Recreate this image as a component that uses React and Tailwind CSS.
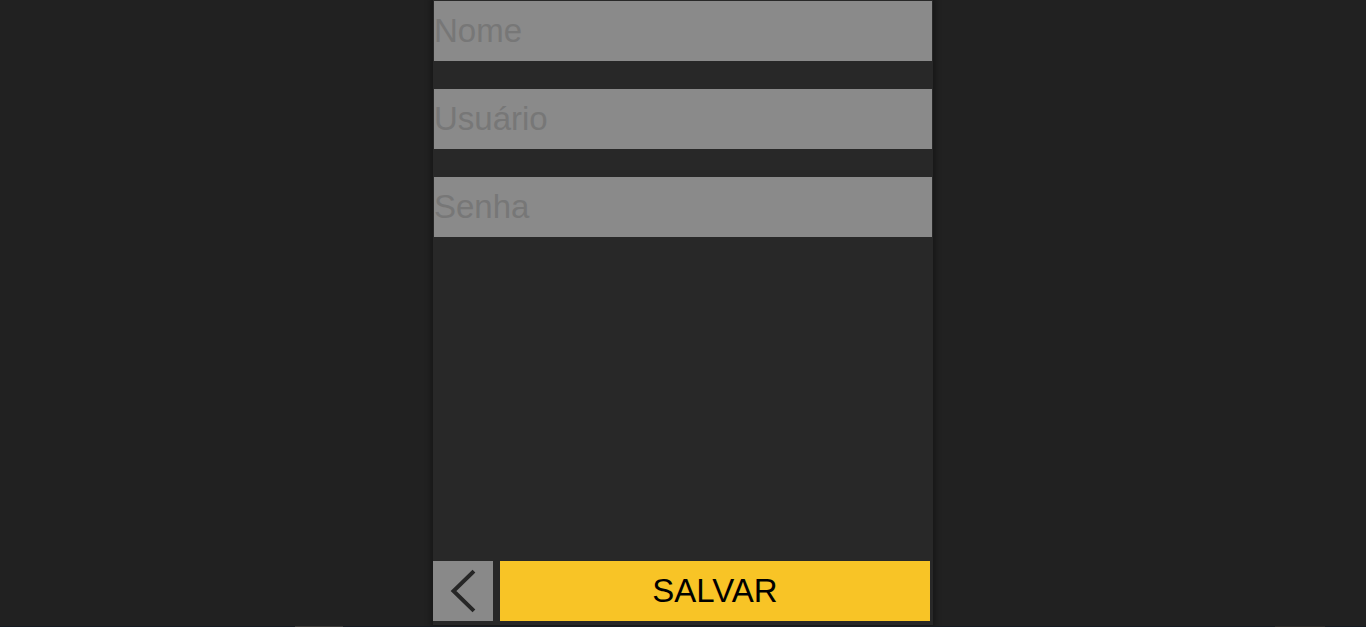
import React from "react";

export default function App() {
  const font = { fontFamily: '"Liberation Sans", Arial, sans-serif' };
  return (
    <div className="w-full h-[627px] bg-[#212121] flex flex-col overflow-hidden" style={font}>
      <div className="flex-1 flex justify-center">
        <div className="w-[500px] h-[625px] bg-[#282828] flex flex-col shadow-[0_0_6px_2px_rgba(0,0,0,0.35)]">
          <div className="mx-px mt-px flex flex-col gap-[28px]">
            {["Nome", "Usuário", "Senha"].map((p) => (
              <input
                key={p}
                placeholder={p}
                className="h-[60px] w-full bg-[#8a8a8a] text-[33px] text-[#333] placeholder:text-[#777777] outline-none px-0 pb-px"
                style={font}
              />
            ))}
          </div>
          <div className="flex-1" />
          <div className="flex h-[60px] gap-[7px] mb-[4px] pr-[3px]">
            <button className="w-[60px] h-[60px] bg-[#898989] flex items-center justify-center">
              <svg width="60" height="60" viewBox="0 0 60 60">
                <polyline points="39.5,11.5 20.5,30 39.5,48.5" fill="none" stroke="#262626" strokeWidth="4" strokeLinecap="square" />
              </svg>
            </button>
            <button className="flex-1 h-[60px] bg-[#f8c426] text-black text-[33px] flex items-center justify-center" style={font}>
              SALVAR
            </button>
          </div>
        </div>
      </div>
      <div className="h-px w-full bg-[#161b22] relative">
        <div className="absolute left-[295px] top-0 w-[48px] h-px bg-[#3a3a3a]" />
        <div className="absolute left-[1275px] top-0 w-[50px] h-px bg-[#2a2a2a]" />
      </div>
    </div>
  );
}
